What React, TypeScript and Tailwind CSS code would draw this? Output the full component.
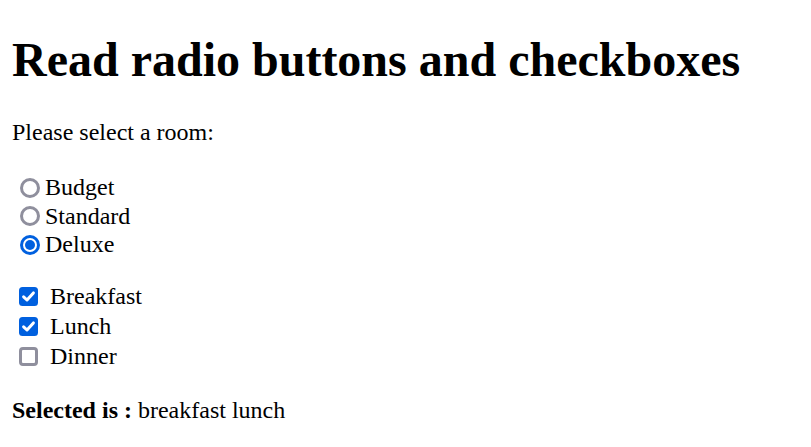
import { useState } from 'react';

const rooms = ['Budget', 'Standard', 'Deluxe'];
const meals = ['Breakfast', 'Lunch', 'Dinner'];

function Radio({ checked }: { checked: boolean }) {
  if (checked) {
    return (
      <svg width="20" height="20" viewBox="0 0 20 20" className="shrink-0">
        <circle cx="10" cy="10" r="10" fill="#0060df" />
        <circle cx="10" cy="10" r="7" fill="#fff" />
        <circle cx="10" cy="10" r="5" fill="#0060df" />
      </svg>
    );
  }
  return (
    <svg width="20" height="20" viewBox="0 0 20 20" className="shrink-0">
      <circle cx="10" cy="10" r="8.5" fill="#fff" stroke="#8f8f9d" strokeWidth="3" />
    </svg>
  );
}

function Checkbox({ checked }: { checked: boolean }) {
  if (checked) {
    return (
      <svg width="19" height="19" viewBox="0 0 19 19" className="shrink-0">
        <rect x="0" y="0" width="19" height="19" rx="3.5" fill="#0060df" />
        <path d="M4.6 9.8 L8 13 L14.4 5.9" fill="none" stroke="#fff" strokeWidth="3" strokeLinecap="round" strokeLinejoin="round" />
      </svg>
    );
  }
  return (
    <svg width="19" height="19" viewBox="0 0 19 19" className="shrink-0">
      <rect x="1.5" y="1.5" width="16" height="16" rx="2.5" fill="#fff" stroke="#8f8f9d" strokeWidth="3" />
    </svg>
  );
}

export default function App() {
  const [room, setRoom] = useState('Deluxe');
  const [picked, setPicked] = useState<string[]>(['Breakfast', 'Lunch']);

  const toggle = (m: string) =>
    setPicked((prev) => (prev.includes(m) ? prev.filter((x) => x !== m) : [...prev, m]));

  const selected = meals.filter((m) => picked.includes(m)).map((m) => m.toLowerCase()).join(' ');

  return (
    <div className="min-h-[447px] bg-white px-[12px] pt-[1px] text-black font-['Liberation_Serif',serif] text-[24px] leading-[27.6px]">
      <h1 className="mt-[31px] text-[48px] font-bold leading-[55px]">Read radio buttons and checkboxes</h1>

      <p className="mt-[32px]">Please select a room:</p>

      <div className="mt-[27px] flex flex-col">
        {rooms.map((r) => (
          <label key={r} className="flex h-[28.5px] cursor-pointer items-center pl-[8px]" onClick={() => setRoom(r)}>
            <Radio checked={room === r} />
            <span className="ml-[5px]">{r}</span>
          </label>
        ))}
      </div>

      <div className="mt-[22.75px] flex flex-col">
        {meals.map((m) => (
          <label key={m} className="flex h-[30px] cursor-pointer items-center pl-[7px]" onClick={() => toggle(m)}>
            <Checkbox checked={picked.includes(m)} />
            <span className="ml-[12px]">{m}</span>
          </label>
        ))}
      </div>

      <p className="mt-[25px]">
        <b>Selected is :</b> {selected}
      </p>
    </div>
  );
}
